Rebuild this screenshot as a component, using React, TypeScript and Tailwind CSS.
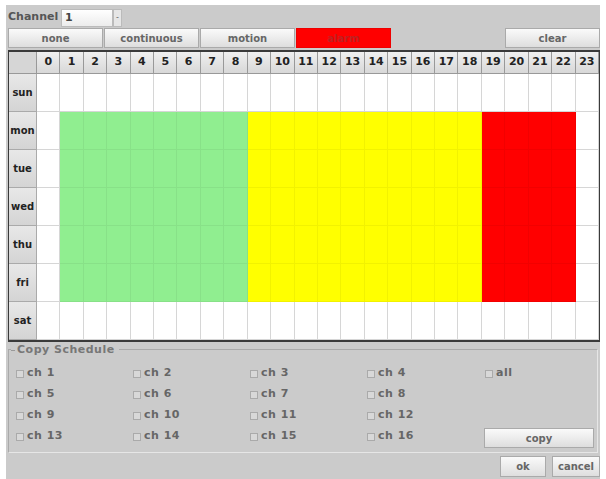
import React from "react";

const days = ["sun", "mon", "tue", "wed", "thu", "fri", "sat"];
const hours = Array.from({ length: 24 }, (_, i) => i);

// mode per hour for mon..fri
function cellColor(day: number, hour: number) {
  if (day < 1 || day > 5) return "";
  if (hour >= 1 && hour <= 8) return "bg-[#90ee90]";
  if (hour >= 9 && hour <= 18) return "bg-[#ffff00]";
  if (hour >= 19 && hour <= 22) return "bg-[#ff0000]";
  return "";
}

const font = { fontFamily: '"DejaVu Sans", sans-serif' };

function Btn({ label, className = "" }: { label: string; className?: string }) {
  return (
    <div
      className={`flex items-center justify-center h-[20px] border border-[#aaa] bg-gradient-to-b from-[#fafafa] to-[#dedede] text-[10px] font-bold text-[#666] ${className}`}
    >
      {label}
    </div>
  );
}

function Check({ label }: { label: string }) {
  return (
    <div className="flex items-center gap-[3px] h-[21px] text-[11px] font-bold text-[#666]">
      <span className="w-[8px] h-[8px] border border-[#aaa] bg-[#d8d8d8]" />
      <span className="tracking-[0.5px]">{label}</span>
    </div>
  );
}

export default function App() {
  const chans = [
    ["ch 1", "ch 2", "ch 3", "ch 4", "all"],
    ["ch 5", "ch 6", "ch 7", "ch 8", ""],
    ["ch 9", "ch 10", "ch 11", "ch 12", ""],
    ["ch 13", "ch 14", "ch 15", "ch 16", ""],
  ];
  return (
    <div className="w-[606px] h-[479px] bg-white pt-[5px] pl-[6px]" style={font}>
      <div className="w-[594px] h-[474px] bg-[#cbcbcb] pl-[2px] flex flex-col">
        {/* channel row */}
        <div className="flex items-center h-[23px] pt-[2px]">
          <span className="text-[11px] font-bold text-[#555] w-[53px]">Channel</span>
          <div className="flex h-[18px]">
            <div className="w-[52px] bg-gradient-to-b from-white to-[#ececec] border border-[#bbb] text-[11px] font-bold text-[#444] pl-[3px] leading-[16px]">
              1
            </div>
            <div className="w-[9px] bg-[#e6e6e6] border border-[#bbb] text-[8px] text-[#666] flex items-center justify-center">
              -
            </div>
          </div>
        </div>
        {/* mode buttons */}
        <div className="flex h-[22px] items-start">
          <Btn label="none" className="w-[95px] mr-[1px]" />
          <Btn label="continuous" className="w-[95px] mr-[1px]" />
          <Btn label="motion" className="w-[95px] mr-[1px]" />
          <div className="w-[95px] h-[20px] bg-[#ff0000] border border-[#e00] flex items-center justify-center text-[10px] font-bold text-[#c02020]">
            alarm
          </div>
          <div className="flex-1" />
          <Btn label="clear" className="w-[95px]" />
        </div>
        {/* schedule grid */}
        <div className="w-[592px] border-t-2 border-b-2 border-x border-[#3a3a3a] grid grid-cols-[28px_repeat(24,1fr)] grid-rows-[22px_repeat(7,38px)] bg-white">
          <div className="bg-[#d6d6d6] border-r border-b border-[#999]" />
          {hours.map((h) => (
            <div
              key={h}
              className="flex items-center justify-center bg-gradient-to-b from-[#f0f0f0] to-[#d8d8d8] border-r border-b border-[#999] text-[11px] font-bold text-[#222]"
            >
              {h}
            </div>
          ))}
          {days.map((d, di) => (
            <React.Fragment key={d}>
              <div className="flex items-center justify-center bg-gradient-to-b from-[#e8e8e8] to-[#d4d4d4] border-r border-b border-[#aaa] text-[10px] font-bold text-[#222]">
                {d}
              </div>
              {hours.map((h) => {
                const c = cellColor(di, h);
                return (
                  <div
                    key={h}
                    className={
                      c
                        ? `${c} border-r border-b border-[rgba(0,0,0,0.05)]`
                        : "bg-white border-r border-b border-[#d6d6d6]"
                    }
                  />
                );
              })}
            </React.Fragment>
          ))}
        </div>
        {/* copy schedule */}
        <div className="relative mt-[7px] w-[590px] h-[104px] border border-[#e6e6e6] border-t-[#aaa] border-l-[#aaa] pl-[7px] pt-[13px]">
          <div className="absolute left-[2px] top-[-8px] flex items-center bg-[#cbcbcb] pr-[4px]">
            <span className="w-[4px] h-px bg-[#999] mr-[2px]" />
            <span className="text-[11px] font-bold text-[#777] tracking-[0.5px]">Copy Schedule</span>
          </div>
          <div className="grid grid-cols-[117px_117px_117px_118px_1fr]">
            {chans.flat().map((c, i) =>
              c ? <Check key={i} label={c} /> : <div key={i} className="h-[21px]" />
            )}
          </div>
          <Btn label="copy" className="absolute left-[475px] top-[78px] w-[110px] h-[20px]" />
        </div>
        {/* ok / cancel */}
        <div className="flex justify-end mt-[3px] gap-[6px]">
          <Btn label="ok" className="w-[46px] h-[21px]" />
          <Btn label="cancel" className="w-[48px] h-[21px]" />
        </div>
      </div>
    </div>
  );
}
